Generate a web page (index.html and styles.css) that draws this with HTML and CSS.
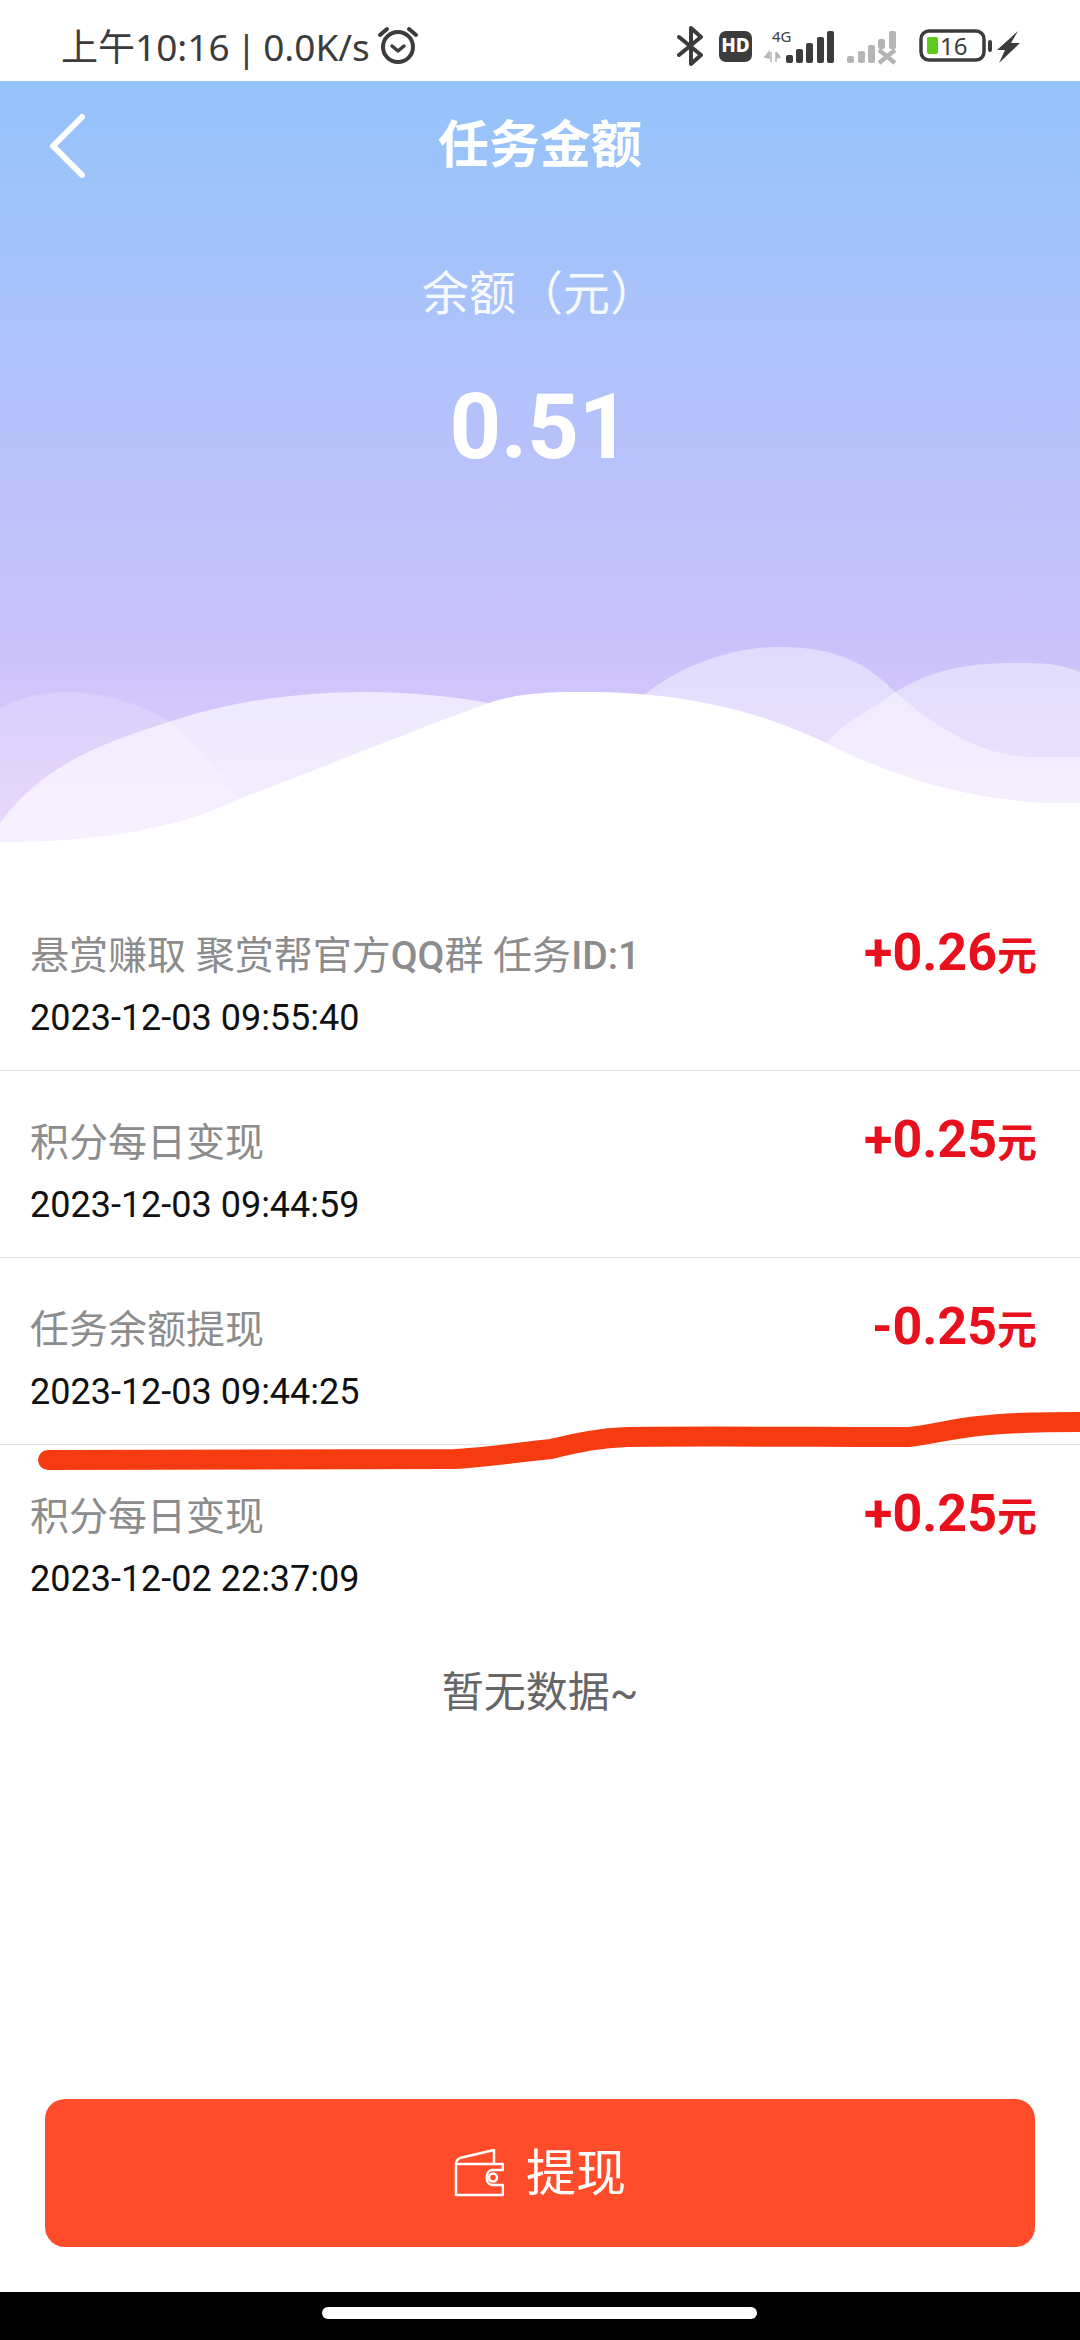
FILE: index.html
```html
<!DOCTYPE html>
<html lang="zh-CN">

<head>
  <meta charset="UTF-8">
  <meta name="viewport" content="width=device-width, initial-scale=1.0">
  <title>任务金额</title>
  <link rel="stylesheet" href="styles.css">
</head>

<body>
  <div class="page">
    <div class="status-bar">
      <div class="status-left">
        <span class="status-text">上午10:16 | 0.0K/s</span>
        <svg class="alarm" viewBox="0 0 42 42" fill="none" stroke="#3c3c3c">
          <circle cx="21" cy="23" r="15" stroke-width="4" />
          <path d="M15 22l6 5 6-5" stroke-width="3.5" stroke-linecap="round" stroke-linejoin="round" />
          <path d="M3 11l7-6M39 11l-7-6" stroke-width="4" stroke-linecap="round" />
        </svg>
      </div>
      <svg class="status-right" viewBox="0 0 345 42" fill="#3c3c3c">
        <!-- bluetooth -->
        <path d="M2 12l22 18-10 9V3l10 9L2 30" fill="none" stroke="#3c3c3c" stroke-width="4" stroke-linejoin="round" stroke-linecap="round" />
        <!-- hd -->
        <rect x="42" y="6" width="33" height="31" rx="7" />
        <text x="58.5" y="27" class="hd-text" text-anchor="middle">HD</text>
        <!-- network -->
        <text x="95" y="17" class="net-text">4G</text>
        <path d="M92 33l-4-1 4-5zM94 27v10M99 27v10M99 27l4 5-4 1" fill="#b5b5b5" stroke="#b5b5b5" stroke-width="1.5" />
        <rect x="109" y="30" width="7" height="8" rx="2" />
        <rect x="119" y="24" width="7" height="14" rx="2" />
        <rect x="129" y="18" width="7" height="20" rx="2" />
        <rect x="140" y="12" width="7" height="26" rx="2" />
        <rect x="150" y="6" width="7" height="32" rx="2" />
        <g fill="#b5b5b5">
          <rect x="170" y="31" width="7" height="7" rx="2" />
          <rect x="181" y="26" width="7" height="12" rx="2" />
          <rect x="191" y="20" width="7" height="18" rx="2" />
          <rect x="201" y="14" width="7" height="10" rx="2" />
          <rect x="212" y="6" width="7" height="18" rx="2" />
          <path d="M202 25l16 13M218 25l-16 13" fill="none" stroke="#b5b5b5" stroke-width="4.5" />
        </g>
        <!-- battery -->
        <rect x="244" y="6" width="63" height="29" rx="8" fill="none" stroke="#3c3c3c" stroke-width="3.5" />
        <rect x="250" y="12" width="11" height="17" rx="2" fill="#5fc91e" />
        <text x="263" y="29.5" class="battery-text">16</text>
        <rect x="311" y="15" width="4" height="12" rx="2" />
        <!-- charge bolt -->
        <path d="M341 6l-21 19h8l-6 13 21-20h-9z" />
      </svg>
    </div>

    <div class="hero">
      <svg class="waves" viewBox="0 0 1080 770">
        <path d="M0 627C22 615 45 611 69 611C105 611 145 625 172 642C197 665 222 695 241 720V770H0Z" fill="#fff" opacity=".18" />
        <path d="M644 614C680 585 730 566 778 566C825 566 860 575 895 611C940 650 985 676 1033 676H1080V770H644Z" fill="#fff" opacity=".42" />
        <path d="M826 662C845 640 870 630 895 611C930 590 965 582 1012 582C1040 582 1060 582 1080 591V770H826Z" fill="#fff" opacity=".42" />
        <path d="M0 742C45 680 110 660 172 640C230 620 300 611 365 611C410 611 450 615 489 622V770H0Z" fill="#fff" opacity=".62" />
        <path d="M0 761C70 761 165 755 241 717C315 690 410 650 489 622C520 611 555 611 585 611C670 611 750 625 826 662C900 700 985 722 1060 722H1080V770H0Z" fill="#fff" />
      </svg>
      <div class="nav">
        <svg class="back" viewBox="0 0 40 66" fill="none" stroke="#fff" stroke-width="6" stroke-linecap="round" stroke-linejoin="round">
          <path d="M34 4L5 33l29 29" />
        </svg>
        <h1 class="nav-title">任务金额</h1>
      </div>
      <div class="balance-label">余额（元）</div>
      <div class="balance">0.51</div>
    </div>

    <ul class="records">
      <li class="record">
        <div class="record-text">
          <div class="record-title">悬赏赚取 聚赏帮官方<b class="latin">QQ</b>群 任务<b class="latin">ID:1</b></div>
          <div class="record-time">2023-12-03 09:55:40</div>
        </div>
        <div class="record-amount">+0.26<span class="unit">元</span></div>
      </li>
      <li class="record">
        <div class="record-text">
          <div class="record-title">积分每日变现</div>
          <div class="record-time">2023-12-03 09:44:59</div>
        </div>
        <div class="record-amount">+0.25<span class="unit">元</span></div>
      </li>
      <li class="record">
        <div class="record-text">
          <div class="record-title">任务余额提现</div>
          <div class="record-time">2023-12-03 09:44:25</div>
        </div>
        <div class="record-amount">-0.25<span class="unit">元</span></div>
      </li>
      <li class="record">
        <div class="record-text">
          <div class="record-title">积分每日变现</div>
          <div class="record-time">2023-12-02 22:37:09</div>
        </div>
        <div class="record-amount">+0.25<span class="unit">元</span></div>
      </li>
    </ul>
    <div class="empty">暂无数据~</div>

    <button class="withdraw">
      <svg class="wallet" viewBox="0 0 50 48" fill="none" stroke="#fff" stroke-width="2.5" stroke-linejoin="round">
        <path d="M2 15V46H49V36H38C31 36 31 21 38 21H49V15ZM2 15C2 11 4 10 6 9L40 1V15" />
        <circle cx="39" cy="28.5" r="4" />
      </svg>
      <span class="withdraw-text">提现</span>
    </button>

    <div class="home-bar">
      <div class="home-pill"></div>
    </div>

    <!-- hand drawn marker over the screenshot -->
    <svg class="marker" viewBox="0 0 1080 2340" fill="none">
      <path d="M48 1460C200 1459 350 1460 455 1459C490 1457 520 1452 551 1449C580 1442 600 1438 627 1437C700 1436 820 1437 909 1437C935 1434 950 1429 978 1426C1010 1422 1050 1422 1090 1422" stroke="#f73b10" stroke-width="20" stroke-linecap="round" />
    </svg>
  </div>
</body>

</html>
```

FILE: styles.css
```css
* {
  box-sizing: border-box;
}

body {
  margin: 0;
  background: #fff;
  font-family: Roboto, "Noto Sans CJK SC", sans-serif;
}

.page {
  width: 1080px;
  height: 2340px;
  position: relative;
  overflow: hidden;
  display: flex;
  flex-direction: column;
}

/* status bar */
.status-bar {
  height: 81px;
  flex: none;
  display: flex;
  justify-content: space-between;
  align-items: center;
  padding: 8px 58px 0 61px;
  color: #3c3c3c;
  font-family: "Noto Sans", "Noto Sans CJK SC", sans-serif;
  font-size: 37px;
}

.status-left {
  display: flex;
  align-items: center;
  gap: 7px;
}

.status-text {
  word-spacing: -3px;
}

.alarm {
  width: 42px;
  height: 42px;
}

.status-right {
  width: 345px;
  height: 42px;
  margin-top: 2px;
}

.hd-text {
  font: 800 19px "Noto Sans", sans-serif;
  fill: #fff;
}

.net-text {
  font: 400 15px "Noto Sans", sans-serif;
}

.battery-text {
  font: 400 24px "Noto Sans", sans-serif;
}

/* top area */
.hero {
  height: 770px;
  flex: none;
  position: relative;
  color: #fff;
  text-align: center;
  background: linear-gradient(#94c3fa 0%, #c9c1fb 72%, #e6d1fb 100%);
}

.waves {
  position: absolute;
  left: 0;
  top: 0;
  width: 1080px;
  height: 770px;
}

.nav {
  position: relative;
  height: 124px;
  padding-bottom: 4px;
  display: flex;
  align-items: center;
  justify-content: center;
}

.back {
  position: absolute;
  left: 48px;
  top: 32px;
  width: 40px;
  height: 66px;
}

.nav-title {
  margin: 0;
  font-size: 51px;
  font-weight: 700;
}

.balance-label {
  position: relative;
  margin-top: 59px;
  font-size: 47px;
  line-height: 60px;
  opacity: .9;
  padding-right: 1px;
}

.balance {
  position: relative;
  margin-top: 54px;
  font-size: 90px;
  font-weight: 700;
  line-height: 100px;
}

/* list */
.records {
  margin: 33px 0 0;
  padding: 0;
  list-style: none;
}

.record {
  height: 187px;
  padding: 44px 43px 0 30px;
  display: flex;
  justify-content: space-between;
  align-items: flex-start;
  border-bottom: 1px solid #e6e6e6;
}

.record:last-child {
  border-bottom: none;
}

.record-title {
  color: #8c8c8c;
  font-size: 39px;
  line-height: 56px;
}

.latin {
  font-weight: 500;
}

.record-time {
  margin-top: 9px;
  color: #111;
  font-size: 36px;
  line-height: 50px;
}

.record-amount {
  margin-top: -5px;
  color: #e9101d;
  font-size: 52px;
  font-weight: 700;
  line-height: 60px;
}

.unit {
  font-size: 40px;
  font-weight: 700;
}

.empty {
  margin-top: 31px;
  color: #666;
  font-size: 42px;
  line-height: 60px;
  text-align: center;
}

/* button + nav */
.withdraw {
  width: 990px;
  height: 148px;
  flex: none;
  margin: auto 45px 45px;
  display: flex;
  justify-content: center;
  align-items: center;
  gap: 22px;
  border: none;
  border-radius: 20px;
  background: #ff4d2b;
  color: #fff;
  font-family: "Noto Sans CJK SC", sans-serif;
  font-size: 50px;
}

.withdraw-text {
  margin-top: -8px;
}

.wallet {
  width: 50px;
  height: 48px;
}

.home-bar {
  height: 48px;
  flex: none;
  padding-top: 15px;
  background: #000;
}

.home-pill {
  width: 435px;
  height: 12px;
  margin-left: 322px;
  border-radius: 6px;
  background: #fff;
}

.marker {
  position: absolute;
  left: 0;
  top: 0;
  width: 1080px;
  height: 2340px;
  pointer-events: none;
}
```
